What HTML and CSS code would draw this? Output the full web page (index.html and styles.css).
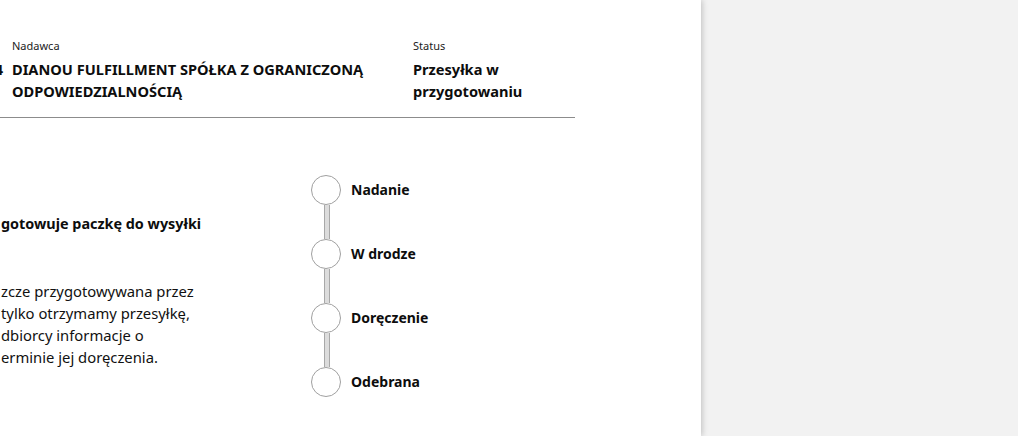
FILE: index.html
```html
<!DOCTYPE html>
<html lang="pl">
<head>
<meta charset="utf-8">
<title>Przesyłka</title>
<link rel="stylesheet" href="styles.css">
</head>
<body>
<div class="page">
  <main class="panel">
    <header class="head">
      <div class="col track">
        <div class="label">Numer</div>
        <div class="value">00000004</div>
      </div>
      <div class="col sender">
        <div class="label">Nadawca</div>
        <div class="value">DIANOU FULFILLMENT SPÓŁKA Z OGRANICZONĄ ODPOWIEDZIALNOŚCIĄ</div>
      </div>
      <div class="col status">
        <div class="label">Status</div>
        <div class="value">Przesyłka w przygotowaniu</div>
      </div>
    </header>
    <section class="body">
      <div class="info">
        <h2 class="info-title">gotowuje paczkę do wysyłki</h2>
        <p class="info-text">zcze przygotowywana przez<br>tylko otrzymamy przesyłkę,<br>dbiorcy informacje o<br>erminie jej doręczenia.</p>
      </div>
      <ol class="timeline">
        <li class="step"><span class="dot"></span><span class="step-label">Nadanie</span></li>
        <li class="step"><span class="dot"></span><span class="step-label">W drodze</span></li>
        <li class="step"><span class="dot"></span><span class="step-label">Doręczenie</span></li>
        <li class="step last"><span class="dot"></span><span class="step-label">Odebrana</span></li>
      </ol>
    </section>
  </main>
  <aside class="side"></aside>
</div>
</body>
</html>
```

FILE: styles.css
```css
* { box-sizing: border-box; }
html, body { margin: 0; padding: 0; }
body {
  background: #f2f2f2;
  font-family: "Noto Sans", "Open Sans", sans-serif;
  color: #0d0d0d;
}
.page {
  display: flex;
  height: 436px;
}
.panel {
  width: 701px;
  flex: none;
  background: #fff;
  overflow: hidden;
  box-shadow: 1px 0 6px rgba(0, 0, 0, 0.22);
  position: relative;
  z-index: 1;
}
.side { flex: 1; }

.head {
  display: flex;
  width: 675px;
  margin-left: -100px;
  padding-top: 38px;
  padding-bottom: 15px;
  border-bottom: 1px solid #8c8c8c;
}
.col { flex: none; }
.track { width: 103px; text-align: right; white-space: nowrap; }
.track .label { visibility: hidden; }
.sender { width: 385px; margin-left: 9px; }
.status { width: 162px; margin-left: 16px; }
.label {
  font-size: 11px;
  line-height: 16px;
  color: #222;
  margin-bottom: 4px;
}
.value {
  font-size: 14.6px;
  line-height: 22px;
  font-weight: 700;
}

.body {
  display: flex;
  padding-top: 57px;
}
.info {
  width: 311px;
  flex: none;
  padding-top: 38px;
  padding-left: 1px;
}
.info-title {
  margin: 0 0 45px;
  font-size: 14.4px;
  line-height: 22px;
  font-weight: 700;
}
.info-text {
  margin: 0;
  font-size: 14.8px;
  line-height: 22px;
  color: #111;
}

.timeline {
  list-style: none;
  margin: 0;
  padding: 0;
}
.step {
  display: flex;
  align-items: flex-start;
  height: 64px;
  position: relative;
}
.step.last { height: 30px; }
.step:not(.last)::after {
  content: "";
  position: absolute;
  left: 13px;
  top: 30px;
  width: 4px;
  height: 34px;
  background: #dcdcdc;
  border-left: 1px solid #a8a8a8;
  border-right: 1px solid #a8a8a8;
}
.dot {
  width: 30px;
  height: 30px;
  border-radius: 50%;
  border: 1px solid #a0a0a0;
  background: #fff;
  flex: none;
}
.step-label {
  margin-left: 10px;
  font-size: 14px;
  line-height: 30px;
  font-weight: 700;
}
```
